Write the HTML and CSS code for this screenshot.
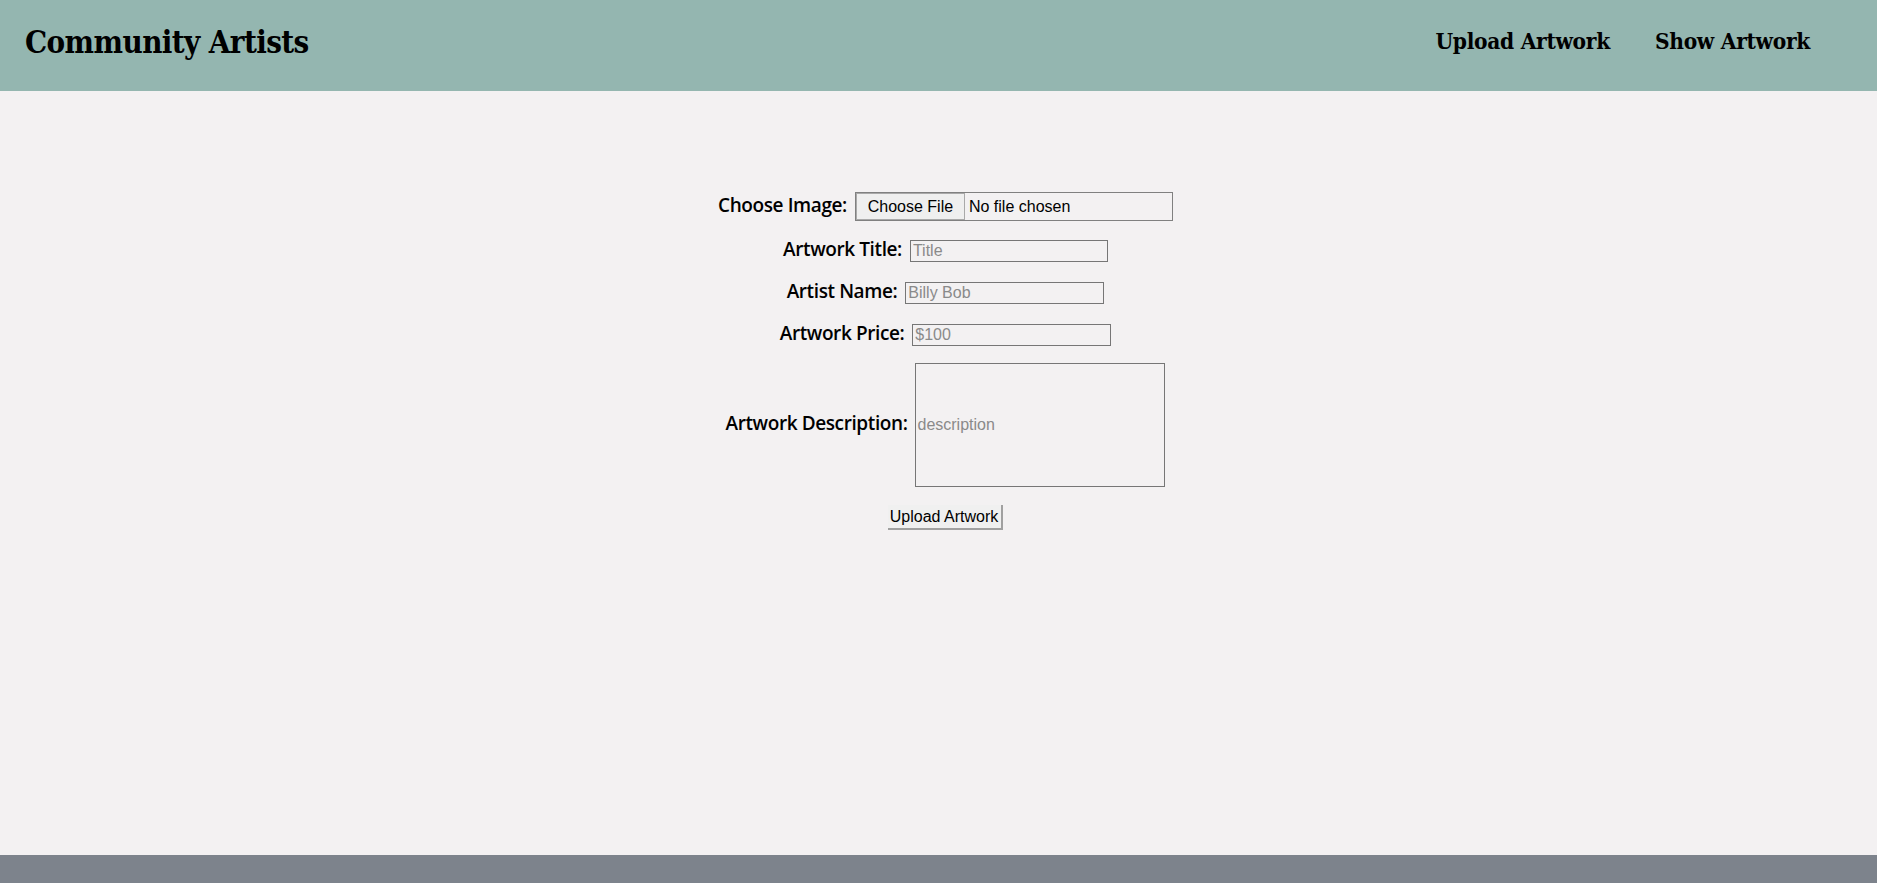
FILE: index.html
```html
<!DOCTYPE html>
<html lang="en">
<head>
<meta charset="utf-8">
<title>Community Artists</title>
<link rel="stylesheet" href="styles.css">
</head>
<body>
<div class="page">
  <header class="header">
    <h1 class="brand">Community Artists</h1>
    <nav class="nav">
      <a class="nav-link" href="#">Upload Artwork</a>
      <a class="nav-link" href="#">Show Artwork</a>
    </nav>
  </header>
  <main class="main">
    <form class="form">
      <div class="row row-file">
        <label class="label" for="img">Choose Image:</label>
        <input class="file" id="img" type="file">
      </div>
      <div class="row row-title">
        <label class="label" for="title">Artwork Title:</label>
        <input class="text w-title" id="title" type="text" placeholder="Title">
      </div>
      <div class="row row-artist">
        <label class="label" for="artist">Artist Name:</label>
        <input class="text w-artist" id="artist" type="text" placeholder="Billy Bob">
      </div>
      <div class="row row-price">
        <label class="label" for="price">Artwork Price:</label>
        <input class="text w-price" id="price" type="text" placeholder="$100">
      </div>
      <div class="row row-desc">
        <label class="label" for="desc">Artwork Description:</label>
        <input class="text desc" id="desc" type="text" placeholder="description">
      </div>
      <button class="submit" type="button">Upload Artwork</button>
    </form>
  </main>
  <footer class="footer"></footer>
</div>
</body>
</html>
```
FILE: styles.css
```css
* { box-sizing: border-box; }
html, body { margin: 0; padding: 0; }
body {
  background: #f3f1f2;
  font-family: "Liberation Sans", Arial, sans-serif;
  color: #000;
}
.page {
  display: flex;
  flex-direction: column;
  min-height: 100vh;
}
.header {
  height: 91px;
  background: #94b6b0;
  display: flex;
  align-items: center;
  justify-content: space-between;
  padding: 0 67px 0 25px;
}
.brand {
  margin: 0;
  font-family: "DejaVu Serif", serif;
  font-weight: bold;
  font-size: 31px;
  letter-spacing: -0.6px;
  font-stretch: condensed;
  line-height: 1;
  padding-bottom: 6px;
}
.nav {
  display: flex;
  gap: 45px;
  padding-bottom: 10px;
}
.nav-link {
  font-family: "DejaVu Serif", serif;
  font-weight: bold;
  font-stretch: condensed;
  font-size: 22.5px;
  letter-spacing: -0.3px;
  color: #000;
  text-decoration: none;
}
.main {
  flex: 1;
  padding-top: 101px;
}
.form {
  display: flex;
  flex-direction: column;
  align-items: center;
  padding-left: 14px;
}
.row {
  display: flex;
  align-items: center;
  gap: 8px;
}
.row-file { margin-bottom: 19px; }
.row-title { margin-bottom: 20px; }
.row-artist { margin-bottom: 20px; }
.row-price { margin-bottom: 17px; }
.row-desc { margin-bottom: 18px; }
.label {
  font-family: "Open Sans", "Noto Sans", sans-serif;
  font-weight: 600;
  font-size: 19px;
  letter-spacing: -0.4px;
  line-height: 22px;
  margin-top: -4px;
}
.file {
  width: 318px;
  height: 29px;
  border: 1px solid #808080;
  font-family: "Liberation Sans", Arial, sans-serif;
  font-size: 16px;
  padding: 0;
  background: transparent;
}
.file::file-selector-button {
  width: 109px;
  height: 27px;
  margin: 0 4px 0 0;
  padding: 0;
  border: 1px solid #a9a9a9;
  background: #efefef;
  font-family: "Liberation Sans", Arial, sans-serif;
  font-size: 16px;
  color: #000;
}
.text {
  height: 22px;
  border: 1px solid #767676;
  background: transparent;
  font-family: "Liberation Sans", Arial, sans-serif;
  font-size: 16px;
  padding: 1px 2px;
}
.text::placeholder { color: #8a8a8a; }
.w-title { width: 198px; }
.w-artist { width: 199px; }
.w-price { width: 199px; }
.desc {
  width: 250px;
  height: 124px;
  padding: 0 1px;
}
.submit {
  margin: 0;
  padding: 1px 3px 0 2px;
  height: 25px;
  border: none;
  border-right: 2px solid #a0a0a0;
  border-bottom: 2px solid #a0a0a0;
  background: #f0f0f0;
  font-family: "Liberation Sans", Arial, sans-serif;
  font-size: 16px;
  color: #000;
}
.footer {
  height: 28px;
  background: #7d838c;
}
```
